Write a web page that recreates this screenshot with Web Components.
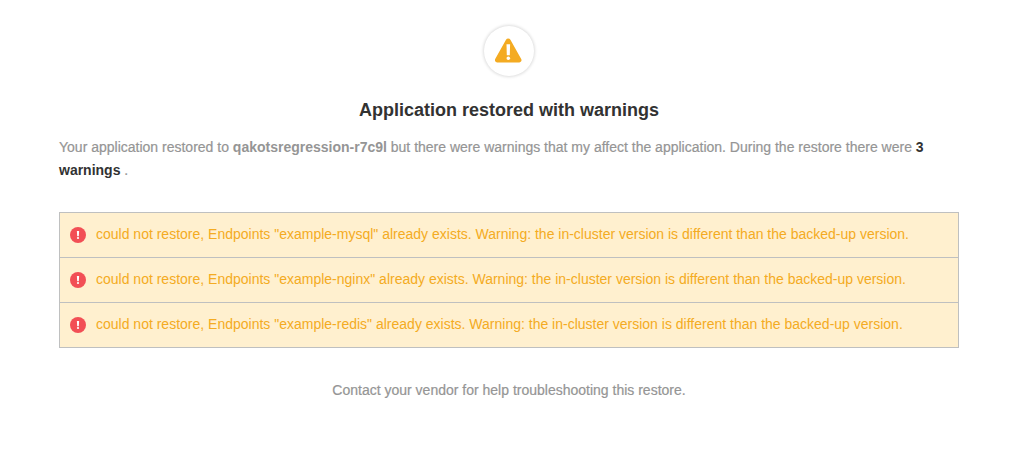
<!DOCTYPE html>
<html lang="en">
<head>
<meta charset="utf-8">
<meta name="viewport" content="width=device-width, initial-scale=1">
<title>Application restored with warnings</title>
<style>
body { margin: 0; background: #fff; font-family: "Liberation Sans", Arial, sans-serif; }
</style>
</head>
<body>
<restore-summary>
  <status-badge slot="badge"></status-badge>
  <span slot="title">Application restored with warnings</span>
  <restore-message app="qakotsregression-r7c9l" count="3"></restore-message>
  <warning-list slot="warnings">
    <warning-item>could not restore, Endpoints "example-mysql" already exists. Warning: the in-cluster version is different than the backed-up version.</warning-item>
    <warning-item>could not restore, Endpoints "example-nginx" already exists. Warning: the in-cluster version is different than the backed-up version.</warning-item>
    <warning-item>could not restore, Endpoints "example-redis" already exists. Warning: the in-cluster version is different than the backed-up version.</warning-item>
  </warning-list>
  <span slot="help">Contact your vendor for help troubleshooting this restore.</span>
</restore-summary>

<script>
function define(name, markup, setup) {
  const template = document.createElement('template');
  template.innerHTML = markup;
  customElements.define(name, class extends HTMLElement {
    constructor() {
      super();
      this.attachShadow({ mode: 'open' }).append(template.content.cloneNode(true));
    }
    connectedCallback() { if (setup) setup(this, this.shadowRoot); }
  });
}

define('status-badge', `
<style>
  :host { display: flex; align-items: center; justify-content: center; width: 50px; height: 50px;
    border-radius: 50%; background: #fff; box-shadow: 0 0 3px 1px #dedede; }
  svg { display: block; }
</style>
<svg width="28" height="26" viewBox="0 0 28 26" role="img" aria-label="Warning">
  <path d="M11 1.7a2.5 2.5 0 0 1 4.4 0l10.8 19.4a2.2 2.2 0 0 1-1.9 3.3H2.1a2.2 2.2 0 0 1-1.9-3.3z" fill="#f4ab22"/>
  <path d="M11.5 6.2h3.6l-.3 11h-3z" fill="#fff"/>
  <circle cx="13.3" cy="20.2" r="1.8" fill="#fff"/>
</svg>`);

define('restore-message', `
<style>
  :host { display: block; }
  p { margin: 0; font-size: 14px; line-height: 23px; color: #959595; -webkit-text-stroke: 0.2px; }
  strong, b { font-weight: bold; -webkit-text-stroke: 0; }
  b { color: #323232; }
</style>
<p>Your application restored to <strong></strong> but there were warnings that my affect the application. During the restore there were <b></b> .</p>`,
(host, root) => {
  root.querySelector('strong').textContent = host.getAttribute('app');
  root.querySelector('b').textContent = host.getAttribute('count') + ' warnings';
});

define('warning-item', `
<style>
  :host { display: flex; align-items: center; gap: 10px; padding: 11px 10px;
    border-bottom: 1px solid #bfc0c0; font-size: 14px; line-height: 22px; color: #f4ab22; }
  :host(:last-child) { border-bottom: 0; }
  svg { flex: none; display: block; }
  span { padding-bottom: 2px; line-height: 20px; }
</style>
<svg width="16" height="16" viewBox="0 0 16 16" aria-hidden="true">
  <circle cx="8" cy="8" r="8" fill="#f24f55"/>
  <path d="M6.9 4h2.2l-.3 5.2H7.2z" fill="#fff"/>
  <circle cx="8" cy="11" r="1.1" fill="#fff"/>
</svg>
<span><slot></slot></span>`, host => host.setAttribute('role', 'listitem'));

define('warning-list', `
<style>
  :host { display: block; background: #fff0cf; border: 1px solid #bfc0c0; }
</style>
<slot></slot>`, host => host.setAttribute('role', 'list'));

define('restore-summary', `
<style>
  :host { display: block; padding: 26px 62px 24px 59px; }
  main { display: flex; flex-direction: column; align-items: stretch; }
  .badge { display: flex; justify-content: center; }
  h1 { margin: 22px 0 14px; font-size: 18px; line-height: 24px; color: #323232; text-align: center; }
  .warnings { margin: 30px 0; }
  .help { margin: 0; font-size: 14px; line-height: 24px; color: #959595; text-align: center; -webkit-text-stroke: 0.2px; }
</style>
<main>
  <div class="badge"><slot name="badge"></slot></div>
  <h1><slot name="title"></slot></h1>
  <slot></slot>
  <div class="warnings"><slot name="warnings"></slot></div>
  <p class="help"><slot name="help"></slot></p>
</main>`);
</script>
</body>
</html>
